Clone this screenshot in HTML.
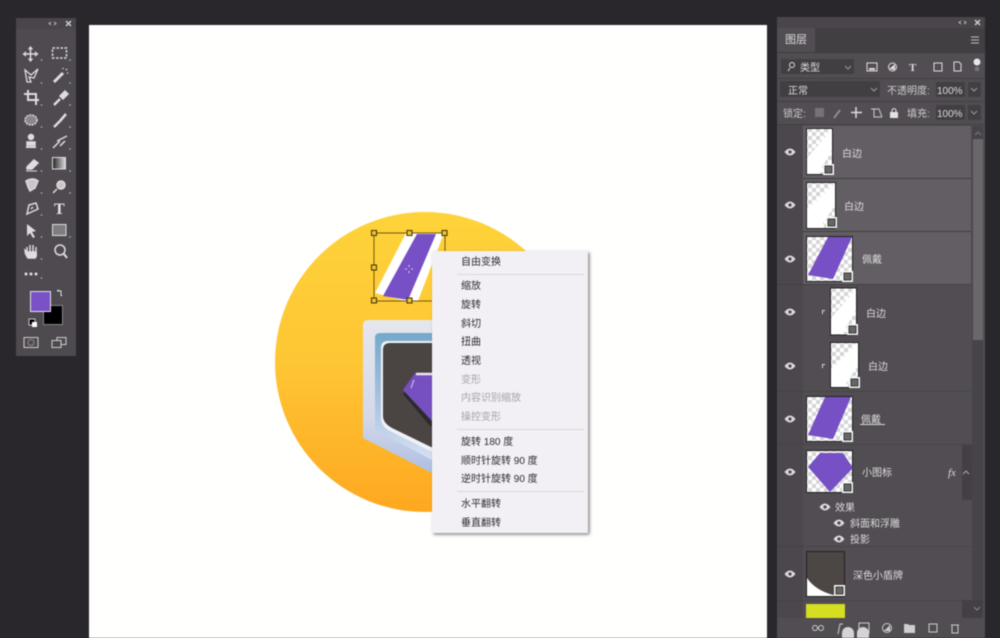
<!DOCTYPE html>
<html><head><meta charset="utf-8"><style>
html,body{margin:0;padding:0;background:#2a272c;width:1000px;height:638px;overflow:hidden}
svg{display:block;filter:blur(.4px)}
text{font-family:"Liberation Sans","Noto Sans CJK SC",sans-serif}
.m{font-size:10px;fill:#2e2c30}
.d{font-size:10px;fill:#a5a3a8}
.l{font-size:10px;fill:#dedcdf}
.t{font-size:10px;fill:#cfcdd0}
</style></head><body>
<svg width="1000" height="638" viewBox="0 0 1000 638" xmlns="http://www.w3.org/2000/svg">
<defs>
<linearGradient id="g" x1="0" y1="0" x2="0" y2="1"><stop offset="0" stop-color="#fed33a"/><stop offset="0.5" stop-color="#fec634"/><stop offset="1" stop-color="#fea820"/></linearGradient>
<linearGradient id="sh" x1="0" y1="0" x2="0" y2="1"><stop offset="0" stop-color="#e6e6ee"/><stop offset=".6" stop-color="#d4d9ea"/><stop offset="1" stop-color="#a9bce2"/></linearGradient>
<linearGradient id="bl" x1="0" y1="0" x2="0" y2="1"><stop offset="0" stop-color="#74a9c9"/><stop offset=".45" stop-color="#a5c0de"/><stop offset="1" stop-color="#dfe5f4"/></linearGradient>
<linearGradient id="gr" x1="0" y1="0" x2="1" y2="0"><stop offset="0" stop-color="#222"/><stop offset="1" stop-color="#ddd"/></linearGradient>
<pattern id="ck" width="8" height="8" patternUnits="userSpaceOnUse"><rect width="8" height="8" fill="#fff"/><rect width="4" height="4" fill="#d6d6d9"/><rect x="4" y="4" width="4" height="4" fill="#d6d6d9"/></pattern>
<filter id="sd" x="-10%" y="-10%" width="125%" height="125%"><feDropShadow dx="1.5" dy="1.5" stdDeviation="1.5" flood-color="#000" flood-opacity=".5"/></filter>
<g id="eye"><path d="M-5.500 0Q0 -7 5.500 0Q0 7 -5.500 0Z" fill="#dcdadd"/><circle r="1.600" fill="#4a464b"/></g>
<g id="so"><rect x="-6" y="-7" width="11" height="11" fill="#f4f4f4"/><rect x="-4" y="-5" width="7" height="7" fill="#666" stroke="#222" stroke-width=".8"/></g>
</defs>

<!-- canvas -->
<rect x="89" y="25" width="678" height="613" fill="#fffffe"/>

<!-- artwork -->
<circle cx="425" cy="362" r="150" fill="url(#g)"/>
<path d="M363 325Q363 320 368 320H470V480L430 472L363 438Z" fill="url(#sh)"/>
<path d="M375 338Q375 333 380 333H470V470L432 460L375 430Z" fill="url(#bl)"/>
<path d="M381 348Q381 341 388 341H470V460L432 452L388 430Q381 425 381 418Z" fill="#f0f2f8"/>
<path d="M383 350Q383 343 390 343H470V455L431 447L392 428Q383 423 383 416Z" fill="#4a4443"/>
<path d="M403 394L418 378L470 378V440L430 426Z" fill="#2e2a2a"/>
<path d="M403 390L415 373L470 373V430L432 421Z" fill="#7650c0"/>
<path d="M416 374H470" stroke="#ece8f4" stroke-width="2.500"/>
<path d="M414 380L411 388" stroke="#dcd4f0" stroke-width="1"/>

<!-- selected piece -->
<path d="M406 233H444L418 301L409 302L375 293Z" fill="#fff"/>
<path d="M417 234H436L408 300L383 296Z" fill="#7650c4"/>
<rect x="374" y="233" width="71" height="68" fill="none" stroke="#6e5a10" stroke-width="1"/>
<g fill="#f2c233" stroke="#3d3208" stroke-width="1">
<rect x="371.500" y="230.500" width="5" height="5"/><rect x="407" y="230.500" width="5" height="5"/><rect x="442" y="230.500" width="5" height="5"/>
<rect x="371.500" y="265" width="5" height="5"/>
<rect x="371.500" y="298" width="5" height="5"/><rect x="407" y="298" width="5" height="5"/>
</g>
<path d="M409 265v2M409 271v2M405 269h2M411 269h2" stroke="#d8d0f0" stroke-width="1"/>

<!-- context menu -->
<rect x="432" y="251" width="156" height="282" fill="#f2f0f4" filter="url(#sd)"/>
<g fill="#d9d7da"><rect x="457" y="274" width="127" height="1"/><rect x="457" y="429" width="127" height="1"/><rect x="457" y="491" width="127" height="1"/></g>
<text class="m" x="461" y="265">自由变换</text>
<text class="m" x="461" y="289">缩放</text>
<text class="m" x="461" y="308">旋转</text>
<text class="m" x="461" y="327">斜切</text>
<text class="m" x="461" y="345">扭曲</text>
<text class="m" x="461" y="364">透视</text>
<text class="d" x="461" y="383">变形</text>
<text class="d" x="461" y="401">内容识别缩放</text>
<text class="d" x="461" y="420">操控变形</text>
<text class="m" x="461" y="445">旋转 180 度</text>
<text class="m" x="461" y="464">顺时针旋转 90 度</text>
<text class="m" x="461" y="482">逆时针旋转 90 度</text>
<text class="m" x="461" y="507">水平翻转</text>
<text class="m" x="461" y="526">垂直翻转</text>

<!-- left toolbar -->
<rect x="16" y="18" width="60" height="338" fill="#4e4a4f"/>
<rect x="16" y="18" width="60" height="11" fill="#49454a"/>
<path d="M51 22l-2 1.500l2 1.500M54 22l2 1.500l-2 1.500" stroke="#bbb" fill="none"/>
<path d="M66 21l5 5M71 21l-5 5" stroke="#ccc" stroke-width="1.500"/>
<g fill="none" stroke="#dedcdf" stroke-width="1.500">
<path d="M30.500 48V60M24.500 54H36.500" stroke-width="1.500"/>
<path d="M28.500 49.500L30.500 47L32.500 49.500M28.500 58.500L30.500 61L32.500 58.500M26 52L23.500 54L26 56M35 52L37.500 54L35 56" stroke-width="1.300"/>
<rect x="52.500" y="48" width="14" height="10" stroke-dasharray="2.500 1.500"/>
<path d="M25 70L31 75L38 69L34 78L29 77L31 82L27 82Z" stroke-width="1.300"/>
<path d="M54 82L63 73" stroke-width="3"/><path d="M66 69l1 1M63 68v1M68 73h-1"/>
<path d="M24 94H36V105M28 90V100H39" stroke-width="2"/>
<path d="M54 105L60 99" stroke-width="2.500"/><path d="M60 96L65 91L68 94L63 99Z" fill="#dedcdf"/>
<ellipse cx="31" cy="120" rx="6" ry="5" fill="#8a878b" stroke-dasharray="2 1"/>
<path d="M54 127L60 121" stroke-width="2.500"/><path d="M60 121L66 114" stroke-width="2.500"/>
<path d="M26 147H36" stroke-width="2"/><circle cx="31" cy="137" r="2.500" fill="#dedcdf"/><rect x="27" y="142" width="8" height="3" fill="#dedcdf"/>
<path d="M53 148L60 141M57 141L67 136M60 146L65 141"/>
<path d="M27 167L34 160L38 163L32 169H27Z" fill="#dedcdf"/><path d="M26 171H37" stroke-width="1"/>
<rect x="52.500" y="157.500" width="13" height="11.500" fill="url(#gr)" stroke-width="1"/>
<path d="M26 181Q33 177 38 181L35 188L30 191L28 187Z" fill="#c8c6c9"/>
<circle cx="61" cy="185" r="4" fill="#c8c6c9"/><path d="M57 189L53 193"/>
<path d="M27 214L29 205L36 203L38 209Z"/><path d="M31 209l2 -2"/>
<rect x="52.500" y="224.500" width="13.500" height="11" fill="#807d81" stroke-width="1"/>
<path d="M27 224L27 236L30 233L33 238L35 237L32 232L36 231Z" fill="#dedcdf" stroke="none"/>
<path d="M27 252V247M30 252V245M33 252V245M36 253V247M27 252L25 250Q25 254 28 258H35Q37 256 36 252Z" fill="#dedcdf" stroke-width="1.500"/>
<circle cx="60" cy="250" r="5"/><path d="M64 254L67 258" stroke-width="2"/>
</g>
<g fill="#bdbbbe"><circle cx="41.500" cy="60" r=".8"/><circle cx="70" cy="60" r=".8"/><circle cx="41.500" cy="83" r=".8"/><circle cx="70" cy="83" r=".8"/><circle cx="41.500" cy="105" r=".8"/><circle cx="70" cy="105" r=".8"/><circle cx="41.500" cy="127" r=".8"/><circle cx="70" cy="127" r=".8"/><circle cx="41.500" cy="149" r=".8"/><circle cx="70" cy="149" r=".8"/><circle cx="41.500" cy="171" r=".8"/><circle cx="70" cy="171" r=".8"/><circle cx="41.500" cy="193" r=".8"/><circle cx="70" cy="193" r=".8"/><circle cx="41.500" cy="215" r=".8"/><circle cx="41.500" cy="237" r=".8"/><circle cx="70" cy="237" r=".8"/><circle cx="41.500" cy="259" r=".8"/><circle cx="41.500" cy="278" r=".8"/></g>
<text x="54" y="214" style="font-size:16px;font-family:'Liberation Serif',serif;font-weight:bold" fill="#e4e2e5">T</text>
<g fill="#dedcdf"><circle cx="26" cy="274" r="1.500"/><circle cx="31" cy="274" r="1.500"/><circle cx="36" cy="274" r="1.500"/></g>
<rect x="43.500" y="305.500" width="19" height="19" fill="#000" stroke="#8a888b" stroke-width="1"/>
<rect x="30.500" y="291.500" width="20" height="20" fill="#7b51c8" stroke="#e4e2e6" stroke-width="1"/>
<path d="M57 291H61V296M57 291l2 -1M61 296l1 -1" stroke="#ddd" fill="none"/>
<rect x="29" y="319" width="6" height="6" fill="#000" stroke="#ccc"/><rect x="32" y="322" width="5" height="5" fill="#fff"/>
<rect x="24" y="337.500" width="14" height="10" fill="none" stroke="#cfcdd0"/><circle cx="31" cy="342.500" r="3" fill="none" stroke="#8d8b8e"/>
<rect x="57" y="337.500" width="9" height="7" fill="none" stroke="#cfcdd0"/><rect x="52" y="340.500" width="9" height="7" fill="#4e4a4f" stroke="#cfcdd0"/>

<!-- right panel -->
<rect x="777" y="17" width="208" height="621" fill="#514d52"/>
<rect x="777" y="17" width="208" height="11" fill="#49454a"/>
<rect x="815" y="28" width="170" height="24" fill="#423f43"/>
<rect x="777" y="52" width="208" height="1" fill="#3f3c40"/>
<text x="785" y="43" style="font-size:11px" fill="#dcdadd">图层</text>
<path d="M961 21l-2 1.500l2 1.500M964 21l2 1.500l-2 1.500" stroke="#bbb" fill="none"/>
<path d="M975 20l5 5M980 20l-5 5" stroke="#ccc" stroke-width="1.500"/>
<path d="M971 37h8M971 40h8M971 43h8" stroke="#bbb"/>
<!-- filter row -->
<rect x="781" y="59" width="73" height="15" fill="#423f43"/>
<circle cx="792" cy="65" r="2.500" fill="none" stroke="#ddd"/><path d="M790 68l-2 3" stroke="#ddd"/>
<text class="l" x="800" y="71">类型</text>
<path d="M845 66l3 3l3 -3" stroke="#999" fill="none"/>
<g fill="none" stroke="#dedcdf"><rect x="867" y="63" width="10" height="8"/><path d="M869 69h6" stroke-width="2"/><circle cx="892.500" cy="67" r="4"/><rect x="934" y="63" width="8" height="8"/><path d="M954 62h5l2 2v7h-7z"/></g>
<path d="M889 69l6 -5v6z" fill="#dedcdf"/>
<text x="909" y="71" style="font-size:11px;font-family:'Liberation Serif',serif;font-weight:bold" fill="#dedcdf">T</text>
<circle cx="977" cy="62" r="3.500" fill="#e8e6e9"/><rect x="975" y="67" width="4" height="4" fill="#77747a"/>
<rect x="777" y="78" width="208" height="1" fill="#423f43"/>
<!-- blend -->
<rect x="780" y="81" width="100" height="16" fill="#423f43"/>
<text class="l" x="788" y="94">正常</text>
<path d="M871 88l3 3l3 -3" stroke="#999" fill="none"/>
<text class="t" x="887" y="94">不透明度:</text>
<rect x="936" y="82" width="29" height="15" fill="#423f43"/><text class="l" x="937" y="94">100%</text>
<rect x="968" y="82" width="13" height="15" fill="#423f43"/><path d="M971 88l3 3l3 -3" stroke="#999" fill="none"/>
<rect x="777" y="101" width="208" height="1" fill="#423f43"/>
<!-- lock -->
<text class="t" x="783" y="117">锁定:</text>
<rect x="815" y="108" width="9" height="9" fill="#757276"/>
<path d="M834 118l6 -8" stroke="#8d8a8e" stroke-width="2"/>
<path d="M856 107v11M851 112.500h11" stroke="#dedcdf" stroke-width="1.500"/>
<path d="M871 109h8l3 8M874 109v8h8" fill="none" stroke="#cfcdd0"/>
<rect x="890" y="112" width="8" height="6" fill="#e4e2e5"/><path d="M892 112v-2q2 -3 4 0v2" fill="none" stroke="#e4e2e5"/>
<text class="t" x="907" y="117">填充:</text>
<rect x="936" y="105" width="29" height="15" fill="#423f43"/><text class="l" x="937" y="117">100%</text>
<rect x="968" y="105" width="13" height="15" fill="#423f43"/><path d="M971 111l3 3l3 -3" stroke="#999" fill="none"/>
<rect x="777" y="124" width="208" height="1" fill="#423f43"/>

<!-- layers -->
<rect x="777" y="125" width="26" height="493" fill="#4b474c"/>
<rect x="803" y="126" width="168" height="158" fill="#625e63"/>
<g fill="#423f43"><rect x="803" y="178" width="168" height="1"/><rect x="803" y="231" width="168" height="1"/><rect x="777" y="284" width="194" height="1"/><rect x="777" y="391" width="194" height="1" opacity=".5"/><rect x="777" y="444" width="194" height="1" opacity=".5"/><rect x="777" y="546" width="194" height="1" opacity=".6"/><rect x="777" y="600" width="194" height="1" opacity=".6"/></g>
<!-- scrollbar -->
<rect x="972" y="126" width="11" height="492" fill="#47434a"/>
<rect x="973" y="139" width="10" height="201" fill="#6a676b"/>
<path d="M975 135l3 -3l3 3" stroke="#777" fill="none"/>
<rect x="962" y="445" width="10" height="55" fill="#433f44"/>
<rect x="962" y="600" width="21" height="18" fill="#433f44"/>

<use href="#eye" x="790" y="152"/><use href="#eye" x="790" y="205"/><use href="#eye" x="790" y="259"/><use href="#eye" x="790" y="312"/><use href="#eye" x="790" y="366"/><use href="#eye" x="790" y="419"/><use href="#eye" x="790" y="472"/><use href="#eye" x="790" y="574"/>

<!-- thumbs -->
<rect x="806.500" y="128.500" width="26" height="46" fill="url(#ck)" stroke="#222"/><path d="M807 174V158L832 129V150L818 174Z" fill="#fff"/><use href="#so" x="829" y="171"/>
<rect x="806.500" y="182.500" width="29" height="46" fill="url(#ck)" stroke="#222"/><path d="M807 228V210L835 183V205L820 228Z" fill="#fff"/><use href="#so" x="832" y="224"/>
<rect x="806.500" y="236.500" width="46" height="45" fill="url(#ck)" stroke="#222"/><path d="M828 237H852L833 279L808 275Z" fill="#7650c4"/><use href="#so" x="848" y="278"/>
<rect x="830.500" y="288" width="26" height="47" fill="url(#ck)" stroke="#222"/><path d="M831 334V318L856 289V310L842 334Z" fill="#fff"/><use href="#so" x="853" y="331"/>
<rect x="830.500" y="342.500" width="28" height="45" fill="url(#ck)" stroke="#222"/><path d="M831 387V370L858 343V365L844 387Z" fill="#fff"/><use href="#so" x="855" y="384"/>
<rect x="806.500" y="396.500" width="46" height="45" fill="url(#ck)" stroke="#222"/><path d="M825 397H851L833 439L808 435Z" fill="#7650c4"/><use href="#so" x="848" y="438"/>
<rect x="806.500" y="450.500" width="46" height="42" fill="url(#ck)" stroke="#222"/><path d="M820 453H843L853 468L830 492L808 467Z" fill="#7650c4"/><use href="#so" x="848" y="489"/>
<rect x="806.500" y="551.500" width="38" height="45" fill="#fff" stroke="#222"/><path d="M807 552H844V591L833 595Q815 590 807 578Z" fill="#4c4644"/><use href="#so" x="840" y="592"/>
<rect x="806" y="604" width="39" height="14" fill="#d6de22"/>

<g fill="#d8d6d9"><rect x="822" y="310" width="3" height="1"/><rect x="822" y="311" width="1" height="3"/><rect x="822" y="364" width="3" height="1"/><rect x="822" y="365" width="1" height="3"/></g>

<text class="l" x="842" y="157">白边</text>
<text class="l" x="844" y="210">白边</text>
<text class="l" x="862" y="263">佩戴</text>
<text class="l" x="866" y="317">白边</text>
<text class="l" x="868" y="370">白边</text>
<text class="l" x="861" y="423">佩戴</text>
<rect x="860" y="424" width="25" height="1" fill="#d8d6d9"/>
<text class="l" x="862" y="476">小图标</text>
<text x="948" y="476" style="font-size:11px;font-family:'Liberation Serif',serif;font-style:italic" fill="#dedcdf">fx</text>
<path d="M963 474l3 -3l3 3" stroke="#aaa" fill="none"/>
<use href="#eye" x="825" y="507"/><text class="l" x="835" y="511">效果</text>
<use href="#eye" x="839" y="523"/><text class="l" x="850" y="527">斜面和浮雕</text>
<use href="#eye" x="839" y="539"/><text class="l" x="850" y="543">投影</text>
<text class="l" x="853" y="579">深色小盾牌</text>
<path d="M974 607l3 3l3 -3" stroke="#888" fill="none"/>

<!-- bottom bar -->
<rect x="777" y="618" width="208" height="20" fill="#514d52"/>
<g fill="none" stroke="#cfcdd0">
<circle cx="815" cy="628" r="2.500"/><circle cx="821" cy="628" r="2.500"/>
<path d="M838 634l2 -10h3"/>
<rect x="859" y="623" width="10" height="10"/>
<circle cx="887" cy="628" r="4.500"/>
<rect x="929" y="624" width="8" height="8"/>
<path d="M951 625h8M952 625v8h6v-8"/>
</g>
<path d="M904 624h4l1 1h6v8h-11z" fill="#cfcdd0"/>
<path d="M884 631l6 -6v6z" fill="#cfcdd0"/>
<rect x="842" y="627" width="12" height="22" rx="6" fill="#d5d3d6"/>
<rect x="857" y="627" width="12" height="22" rx="6" fill="#d5d3d6"/>
</svg>
</body></html>
